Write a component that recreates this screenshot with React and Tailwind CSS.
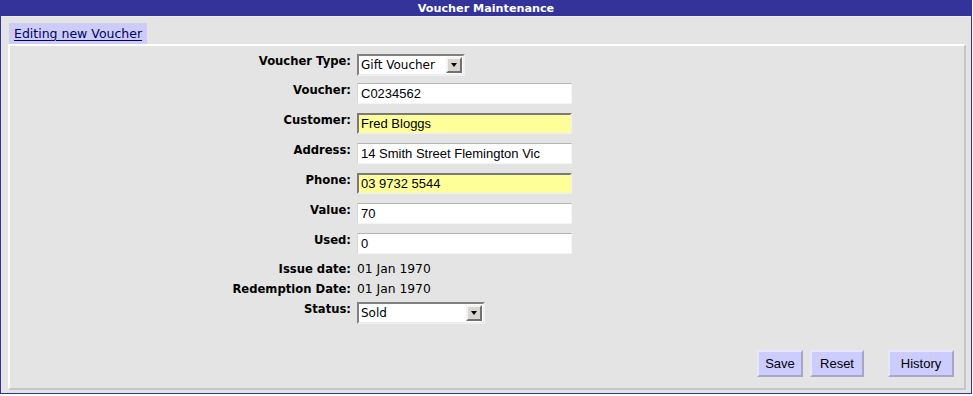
import React from "react";

const labelCls =
  "w-[341px] shrink-0 text-right font-bold text-[11.6px] leading-[15px] text-black";
const verdana = { fontFamily: '"DejaVu Sans", Verdana, sans-serif' };

function Input({ value, yellow }) {
  return (
    <div
      className={
        "ml-[6px] w-[215px] h-[21px] flex items-center text-[13px] text-black " +
        (yellow
          ? "bg-[#ffff99] border-2 border-t-[#7a7a7a] border-l-[#7a7a7a] border-b-[#f4f4d0] border-r-[#f4f4d0] pl-[2px]"
          : "bg-white border border-t-[#b4b4b4] border-l-[#d8d8d8] border-b-[#f4f4f4] border-r-[#f4f4f4] pl-[3px]")
      }
      style={{ fontFamily: '"Liberation Sans", Arial, sans-serif' }}
    >
      {value}
    </div>
  );
}

function Select({ value, width }) {
  return (
    <div
      className={
        "ml-[6px] h-[22px] bg-white border-2 border-t-[#808080] border-l-[#808080] border-b-[#f0f0f0] border-r-[#f0f0f0] flex items-center justify-between pl-[2px] pr-[1px] text-[12px] text-black " +
        width
      }
      style={verdana}
    >
      <span className="leading-[18px]">{value}</span>
      <div className="w-[16px] h-[16px] bg-[#d8d6ce] border-2 border-t-[#f4f4f4] border-l-[#f4f4f4] border-b-[#707070] border-r-[#707070] flex items-center justify-center">
        <div className="w-0 h-0 border-l-[3.5px] border-r-[3.5px] border-t-[4px] border-l-transparent border-r-transparent border-t-black" />
      </div>
    </div>
  );
}

function Button({ children, w }) {
  return (
    <div
      className={
        "h-[27px] bg-[#ccccff] border-2 border-t-[#e6e6ff] border-l-[#e6e6ff] border-b-[#a6a6c6] border-r-[#a6a6c6] flex items-center justify-center text-[13px] text-black " +
        w
      }
      style={{ fontFamily: '"Liberation Sans", Arial, sans-serif' }}
    >
      {children}
    </div>
  );
}

export default function App() {
  return (
    <div className="w-[973px] h-[396px] bg-white">
      <div
        className="w-[972px] h-[394px] border border-[#333399] bg-[#e4e4e4] flex flex-col"
        style={verdana}
      >
        <div className="h-[15px] bg-[#333399] text-white font-bold text-[11.2px] leading-[15px] text-center border-b border-b-[#ececec] box-content">
          Voucher Maintenance
        </div>
        <div className="pl-[8px] pt-[6px] flex">
          <div className="h-[21px] px-[5px] bg-[#ccccf6] text-[12.5px] leading-[21px] text-[#000066] underline underline-offset-2">
            Editing new Voucher
          </div>
        </div>
        <div className="ml-[7px] w-[958px] h-[346px] border-2 border-t-white border-l-white border-b-[#c6c6c6] border-r-[#c6c6c6] flex flex-col">
          <div className="pt-[8px] flex flex-col">
            <div className="flex items-start h-[29px]">
              <div className={labelCls}>Voucher Type:</div>
              <Select value="Gift Voucher" width="w-[108px]" />
            </div>
            {[
              ["Voucher:", "C0234562", false],
              ["Customer:", "Fred Bloggs", true],
              ["Address:", "14 Smith Street Flemington Vic", false],
              ["Phone:", "03 9732 5544", true],
              ["Value:", "70", false],
            ].map(([l, v, y]) => (
              <div key={l} className="flex items-start h-[30px]">
                <div className={labelCls}>{l}</div>
                <Input value={v} yellow={y} />
              </div>
            ))}
            <div className="flex items-start h-[26px]">
              <div className={labelCls}>Used:</div>
              <Input value="0" />
            </div>
            <div className="flex items-baseline h-[20px]">
              <div className={labelCls + " leading-[20px]"}>Issue date:</div>
              <div className="ml-[6px] text-[12.3px] leading-[20px] text-black">01 Jan 1970</div>
            </div>
            <div className="flex items-baseline h-[20px]">
              <div className={labelCls + " leading-[20px]"}>Redemption Date:</div>
              <div className="ml-[6px] text-[12.3px] leading-[20px] text-black">01 Jan 1970</div>
            </div>
            <div className="flex items-start pt-[3px]">
              <div className={labelCls}>Status:</div>
              <Select value="Sold" width="w-[128px]" />
            </div>
          </div>
          <div className="mt-auto flex justify-end items-center pr-[10px] pb-[11px]">
            <Button w="w-[46px]">Save</Button>
            <div className="w-[7px]" />
            <Button w="w-[54px]">Reset</Button>
            <div className="w-[24px]" />
            <Button w="w-[66px]">History</Button>
          </div>
        </div>
      </div>
    </div>
  );
}
